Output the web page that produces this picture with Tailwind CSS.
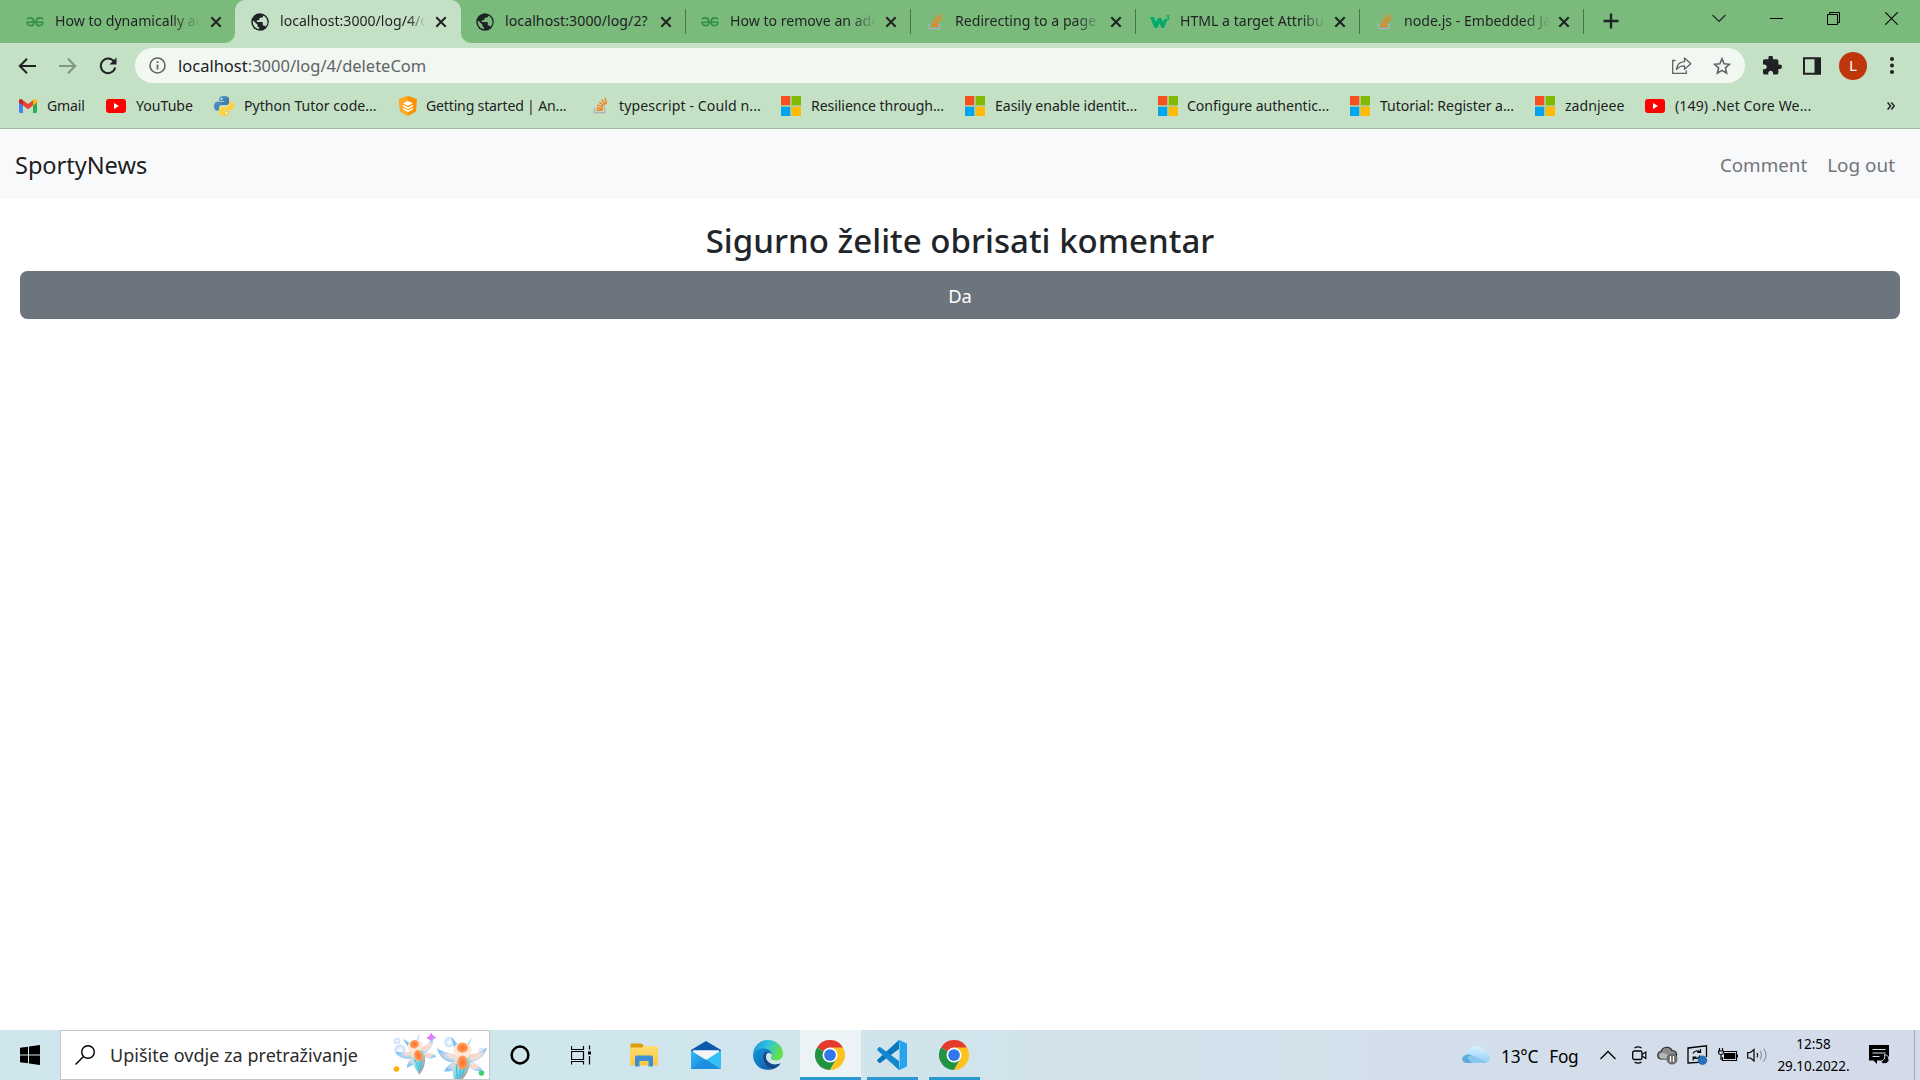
<!DOCTYPE html>
<html lang="hr">
<head>
<meta charset="utf-8">
<title>SportyNews</title>
<script src="https://cdn.jsdelivr.net/npm/@tailwindcss/browser@4"></script>
</head>
<body class="flex h-screen w-screen flex-col overflow-hidden bg-white font-['Noto_Sans','Open_Sans',sans-serif] text-[14.1px] text-[#202124]">

<!-- shared icons -->
<svg class="absolute size-0">
  <defs>
    <linearGradient id="py1" x1="0" y1="0" x2="1" y2="1"><stop offset="0" stop-color="#5a9fd4"/><stop offset="1" stop-color="#306998"/></linearGradient>
    <linearGradient id="py2" x1="0" y1="0" x2="1" y2="1"><stop offset="0" stop-color="#ffe052"/><stop offset="1" stop-color="#ffc331"/></linearGradient>
    <linearGradient id="edgeTop" x1="0" y1="0" x2="1" y2=".35"><stop offset="0" stop-color="#1b8fd6"/><stop offset=".5" stop-color="#2fc2df"/><stop offset="1" stop-color="#66e04b"/></linearGradient>
    <linearGradient id="edgeLow" x1="0" y1="0" x2="1" y2="1"><stop offset="0" stop-color="#1595e0"/><stop offset="1" stop-color="#0c59a4"/></linearGradient>
    <linearGradient id="mailG" x1="0" y1="0" x2="1" y2="1"><stop offset="0" stop-color="#35b8f1"/><stop offset="1" stop-color="#1583d8"/></linearGradient>
    <linearGradient id="folderG" x1="0" y1="0" x2="0" y2="1"><stop offset="0" stop-color="#ffdc70"/><stop offset="1" stop-color="#fcc844"/></linearGradient>
    <linearGradient id="cloudG" x1="0" y1="0" x2="0" y2="1"><stop offset="0" stop-color="#d9f2ff"/><stop offset="1" stop-color="#8fd0f5"/></linearGradient>
    <radialGradient id="bubble"><stop offset="0" stop-color="#ffffff"/><stop offset="1" stop-color="#c3dcfb"/></radialGradient>
    <radialGradient id="wing" cx=".55" cy=".5" r=".55"><stop offset="0" stop-color="#ffc9a3"/><stop offset=".55" stop-color="#f5dfdb"/><stop offset="1" stop-color="#7cc4fa"/></radialGradient>
    <linearGradient id="tail" x1=".2" y1="0" x2=".8" y2="1"><stop offset="0" stop-color="#fbe3d6"/><stop offset=".5" stop-color="#7fd4e8"/><stop offset="1" stop-color="#f4623a"/></linearGradient>
    <radialGradient id="core"><stop offset="0" stop-color="#ff6a2b"/><stop offset="1" stop-color="#ffa25f"/></radialGradient>
    <symbol id="x" viewBox="0 0 12 12"><path d="M1.3 1.3l9.4 9.4M10.7 1.3l-9.4 9.4" stroke="#202124" stroke-width="2" fill="none"/></symbol>
    <symbol id="gfg" viewBox="0 0 18 12"><g fill="none" stroke="#2f8d46" stroke-width="1.6"><path d="M1.2 3.4C2 1.2 7.800 .8 7.900 5.900C7.900 11 1.300 10.600 1.100 6.300H16.900C16.700 10.600 10.100 11 10.100 5.900C10.200 .8 16 1.200 16.800 3.400"/></g></symbol>
    <symbol id="globe" viewBox="2 2 20 20"><circle cx="12" cy="12" r="9.700" fill="#202124"/><path d="M4.300 10.300l4.900 4.700v1.200c0 1 .9 1.900 1.900 1.900v1.800C6.900 19.500 4 16 4 12c0-.6.1-1.200.3-1.700zM18 17.400c-.3-.8-1-1.400-1.900-1.400h-1v-3c0-.6-.5-1-1-1H8.500v-2h2c.6 0 1-.5 1-1V7.200h2c1.100 0 1.900-.9 1.900-1.900v-.5c3 1.200 4.900 4 4.900 7.200 0 2.100-.8 4-2.300 5.400z" fill="currentColor"/></symbol>
    <symbol id="so" viewBox="0 0 16 18"><path d="M1.500 11.500v5h11v-5" fill="none" stroke="#aeb0b5" stroke-width="1.400"/><g stroke="#f48024" stroke-width="1.500"><path d="M3.500 14h7M3.700 11.400l7 1M4.500 8.300l6.500 2.400M6.500 5.200l5.300 4.200M9.300 2.700l3.800 5.500M13 .9l1.200 6.600"/></g></symbol>
    <symbol id="ms" viewBox="0 0 20 20"><path d="M0 0h20v20H0z" fill="#b5cfa0"/><path d="M0 0h9.200v9.200H0z" fill="#f65022"/><path d="M10.800 0H20v9.200h-9.200z" fill="#7fba00"/><path d="M0 10.800h9.200V20H0z" fill="#00a4ef"/><path d="M10.800 10.800H20V20h-9.200z" fill="#ffb900"/></symbol>
    <symbol id="yt" viewBox="0 0 20 14"><rect width="20" height="14" rx="3" fill="#f00"/><path d="M8 4l5 3-5 3z" fill="#fff"/></symbol>
    <symbol id="gmail" viewBox="0 0 18 14"><path d="M0 1.800V12.800q0 1.200 1.200 1.200H4V6z" fill="#4285f4"/><path d="M18 1.800V12.800q0 1.200-1.200 1.200H14V6z" fill="#34a853"/><path d="M0 1.800C0 0 1.800-.5 3 .5L4 1.300V6.500L0 3.500z" fill="#c5221f"/><path d="M18 1.800C18 0 16.200-.5 15 .5L14 1.300V6.500L18 3.500z" fill="#fbbc04"/><path d="M4 1.300L9 5.100 14 1.300V6.500L9 10.200 4 6.500z" fill="#ea4335"/></symbol>
    <symbol id="python" viewBox="0 0 20 20"><path d="M9.900 0C6.600 0 5.300 1 5.300 2.700V5h4.800v.8H3.200C1.300 5.800 0 7.400 0 10.200 0 13 1.200 14.600 2.900 14.600h2V12c0-1.800 1.400-3 3-3h4.700c1.500 0 2.400-1 2.400-2.400V2.700C15 1 13.400 0 9.900 0z" fill="url(#py1)"/><path d="M10.100 20c3.300 0 4.600-1 4.600-2.700V15H9.900v-.8h6.900c1.900 0 3.200-1.600 3.200-4.400 0-2.800-1.200-4.400-2.900-4.400h-2V8c0 1.800-1.400 3-3 3H7.400C5.900 11 5 12 5 13.400v3.900C5 19 6.600 20 10.100 20z" fill="url(#py2)"/><circle cx="7.500" cy="2.800" r=".9" fill="#fff"/><circle cx="12.500" cy="17.200" r=".9" fill="#fff"/></symbol>
    <symbol id="layers" viewBox="0 0 20 20"><path d="M10 0l9 3-1 12.500L10 20l-8-4.500L1 3z" fill="#ff9100"/><path d="M10 0L1 3l1 12.500L10 20z" fill="#ffa726"/><g fill="#fff"><path d="M5 7.300L10 5l5 2.200-5 2.500z"/><path d="M5 8.800l5 2.400 5-2.400v1.700l-5 2.400-5-2.400z"/><path d="M5 11.800l5 2.400 5-2.400v1.700l-5 2.400-5-2.400z"/></g></symbol>
    <symbol id="chrome" viewBox="0 0 48 48"><path d="M24 24L3.200 12A24 24 0 0 1 44.800 12z" fill="#e33b2e"/><path d="M24 24L3.200 12A24 24 0 0 0 24 48L34.400 30z" fill="#229342"/><path d="M24 24V12H44.800A24 24 0 0 1 24 48L34.400 30z" fill="#fcc31e"/><circle cx="24" cy="24" r="12" fill="#fff"/><circle cx="24" cy="24" r="9.400" fill="#2f77ea"/></symbol>
    <symbol id="creature" viewBox="0 0 50 48"><path d="M17 12L14 1l8 9zM29 12L35 1l-7 9z" fill="#74c3f5"/><path d="M20 18C10 17 3 14 0 12c2 9 9 15 20 14zM30 18c8 0 14-3 19-7-2 8-6 13-18 15z" fill="url(#wing)"/><path d="M20 24c-8 3-12 7-13 11 6 0 11-1 15-5zM30 24c8 2 13 6 15 10-6 1-12 0-15-5z" fill="url(#wing)"/><path d="M18 20c-4 10-3 18 0 28 9-6 15-13 14-27z" fill="url(#tail)"/><path d="M19 28l1 16M23 30l-1 13M28 28l-4 12" stroke="#35c2dc" stroke-width="1.300"/><ellipse cx="25" cy="14" rx="9" ry="8" fill="#fde6da"/><ellipse cx="25" cy="11.500" rx="5.500" ry="5" fill="url(#core)"/><ellipse cx="25" cy="26" rx="5" ry="7" fill="url(#core)"/></symbol>
  </defs>
</svg>

<!-- tab strip -->
<header class="flex h-[43px] shrink-0 items-end bg-[#7abb7c] pl-[10px]">
  <div class="flex h-[43px] w-[225px] items-center pl-4">
    <svg class="h-3 w-[18px]"><use href="#gfg"/></svg>
    <span class="ml-[11px] w-[146px] overflow-hidden pb-0.5 whitespace-nowrap bg-linear-to-r from-[#202124] from-80% to-transparent bg-clip-text text-transparent">How to dynamically add</span>
    <svg class="ml-[9px] size-3"><use href="#x"/></svg>
  </div>
  <div class="relative flex h-[43px] w-[226px] items-center rounded-t-[10px] bg-[#c5e1c5] pl-4">
    <svg class="absolute bottom-0 -left-2.5 size-2.5" viewBox="0 0 10 10"><path d="M10 0A10 10 0 0 1 0 10h10z" fill="#c5e1c5"/></svg>
    <svg class="absolute -right-2.5 bottom-0 size-2.5" viewBox="0 0 10 10"><path d="M0 0a10 10 0 0 0 10 10H0z" fill="#c5e1c5"/></svg>
    <svg class="size-[18px] text-[#c5e1c5]"><use href="#globe"/></svg>
    <span class="ml-[11px] w-[146px] overflow-hidden pb-0.5 whitespace-nowrap bg-linear-to-r from-[#202124] from-88% to-transparent bg-clip-text text-transparent">localhost:3000/log/4/d</span>
    <svg class="ml-[9px] size-3"><use href="#x"/></svg>
  </div>
  <div class="flex h-[43px] w-[225px] items-center pl-[15px]">
    <svg class="size-[18px] text-[#7abb7c]"><use href="#globe"/></svg>
    <span class="ml-[11px] w-[146px] pb-0.5 tracking-[0.08px] whitespace-nowrap">localhost:3000/log/2?</span>
    <svg class="ml-[9px] size-3"><use href="#x"/></svg>
    <i class="ml-auto h-[25px] w-px bg-[#4a7150]"></i>
  </div>
  <div class="flex h-[43px] w-[225px] items-center pl-[15px]">
    <svg class="h-3 w-[18px]"><use href="#gfg"/></svg>
    <span class="ml-[11px] w-[146px] overflow-hidden pb-0.5 whitespace-nowrap bg-linear-to-r from-[#202124] from-83% to-transparent bg-clip-text text-transparent">How to remove an add</span>
    <svg class="ml-[9px] size-3"><use href="#x"/></svg>
    <i class="ml-auto h-[25px] w-px bg-[#4a7150]"></i>
  </div>
  <div class="flex h-[43px] w-[225px] items-center pl-[17px]">
    <svg class="h-[17px] w-[15px]"><use href="#so"/></svg>
    <span class="ml-3 w-[146px] overflow-hidden pb-0.5 whitespace-nowrap bg-linear-to-r from-[#202124] from-83% to-transparent bg-clip-text text-transparent">Redirecting to a page</span>
    <svg class="ml-[9px] size-3"><use href="#x"/></svg>
    <i class="ml-auto h-[25px] w-px bg-[#4a7150]"></i>
  </div>
  <div class="flex h-[43px] w-[224px] items-center pl-3.5">
    <svg class="h-3.5 w-5" viewBox="0 0 20 14"><path d="M0 2h4l2 5 2-4h3l2 4 1.500-3h3L14 13h-2.500L9.500 8.500 7 13H4.500z" fill="#04aa6d"/><path d="M16.300.8h2.500L17.500 2.500q1.500.2 1.200 1.400-.6 1.200-2.500.5" fill="none" stroke="#04aa6d" stroke-width="1.100"/></svg>
    <span class="ml-[10px] w-[146px] overflow-hidden pb-0.5 whitespace-nowrap bg-linear-to-r from-[#202124] from-83% to-transparent bg-clip-text text-transparent">HTML a target Attribu</span>
    <svg class="ml-[8px] size-3"><use href="#x"/></svg>
    <i class="ml-auto h-[25px] w-px bg-[#4a7150]"></i>
  </div>
  <div class="flex h-[43px] w-[224px] items-center pl-[17px]">
    <svg class="h-[17px] w-[15px]"><use href="#so"/></svg>
    <span class="ml-3 w-[146px] overflow-hidden pb-0.5 whitespace-nowrap bg-linear-to-r from-[#202124] from-83% to-transparent bg-clip-text text-transparent">node.js - Embedded Ja</span>
    <svg class="ml-[8px] size-3"><use href="#x"/></svg>
    <i class="ml-auto h-[25px] w-px bg-[#4a7150]"></i>
  </div>
  <svg class="mb-3.5 ml-[19px] size-4" viewBox="0 0 16 16"><path d="M8 .5v15M.5 8h15" stroke="#202124" stroke-width="2.300"/></svg>
  <div class="ml-auto flex h-[43px] items-center pr-[22px] pb-[6px]">
    <svg class="mr-11 h-[9px] w-3.5" viewBox="0 0 14 9"><path d="M.5 1L7 7.500 13.500 1" fill="none" stroke="#202124" stroke-width="1.100"/></svg>
    <svg class="mr-[44px] h-[13px] w-[13px]" viewBox="0 0 13 13"><path d="M0 6.500h13" stroke="#000"/></svg>
    <svg class="mr-[45px] size-[13px] overflow-visible" viewBox="0 0 13 13"><path d="M.5 2.500h10v10H.5zM2.500 2.500v-2h10v10h-2" fill="none" stroke="#000"/></svg>
    <svg class="size-[13px]" viewBox="0 0 13 13"><path d="M.3.300l12.400 12.400M12.700.3L.3 12.700" stroke="#000" stroke-width="1.100"/></svg>
  </div>
</header>

<!-- toolbar -->
<div class="flex h-[45px] shrink-0 items-center bg-[#c5e1c5] pl-[18px]">
  <svg class="h-4 w-[18px]" viewBox="0 0 18 16"><path d="M18 8H2M9 .8L1.800 8 9 15.200" fill="none" stroke="#202124" stroke-width="2"/></svg>
  <svg class="ml-[23px] h-4 w-[18px]" viewBox="0 0 18 16"><path d="M0 8h16M9 .8L16.200 8 9 15.200" fill="none" stroke="#7d967f" stroke-width="2"/></svg>
  <svg class="ml-[22px] size-[18px]" viewBox="0 0 18 18"><path d="M15 4.500A7.300 7.300 0 1 0 16.200 10.500" fill="none" stroke="#202124" stroke-width="2"/><path d="M17.500.6V7.500h-7z" fill="#202124"/></svg>
  <div class="ml-[18px] flex h-[35px] w-[1610px] items-center rounded-full bg-[#f1f7f1] pr-3.5 pl-3.5">
    <svg class="size-[17px]" viewBox="0 0 17 17"><circle cx="8.500" cy="8.500" r="7.500" fill="none" stroke="#5f6368" stroke-width="1.600"/><path d="M8.500 7.500v5M8.500 4.300v1.800" stroke="#5f6368" stroke-width="1.700"/></svg>
    <span class="ml-3 pt-0.5 text-[16.5px] text-[#5f6368]"><span class="text-[#202124]">localhost</span>:3000/log/4/deleteCom</span>
    <svg class="ml-auto h-[17px] w-5" viewBox="0 0 20 17"><path d="M3.500 3.500H.7v12.800h13.600v-3" fill="none" stroke="#5f6368" stroke-width="1.300"/><path d="M4.500 12.500C5 7 8.500 4.800 12.500 4.600V1l6.300 5.700-6.300 5.600V8.800C8.500 8.800 6.300 10 4.500 12.500z" fill="none" stroke="#5f6368" stroke-width="1.300" stroke-linejoin="round"/></svg>
    <svg class="ml-[21px] h-[18px] w-[18px]" viewBox="0 0 18 18"><path d="M9 1.800l2.100 5 5.400.5-4.100 3.600 1.200 5.300L9 13.400l-4.600 2.800 1.200-5.300L1.500 7.300l5.400-.5z" fill="none" stroke="#5f6368" stroke-width="1.600"/></svg>
  </div>
  <svg class="ml-[18px] size-[19px]" viewBox="2 1.500 21 21"><path d="M20.500 11H19V7c0-1.100-.9-2-2-2h-4V3.500a2.500 2.500 0 0 0-5 0V5H4c-1.100 0-2 .9-2 2v3.800h1.500c1.500 0 2.700 1.200 2.700 2.700S5 16.200 3.500 16.200H2V20c0 1.100.9 2 2 2h3.800v-1.500c0-1.500 1.200-2.700 2.700-2.700s2.700 1.200 2.700 2.700V22H17c1.100 0 2-.9 2-2v-4h1.500a2.500 2.500 0 0 0 0-5z" fill="#202124"/></svg>
  <svg class="ml-[21px] size-[18px]" viewBox="0 0 18 18"><path d="M1 1.200h16v15.600H1z" fill="none" stroke="#202124" stroke-width="2"/><path d="M11.500 1h5.500v16h-5.500z" fill="#202124"/></svg>
  <div class="ml-[18px] grid size-7 place-items-center rounded-full bg-[#bf360c] text-[15px] leading-none text-white">L</div>
  <svg class="ml-[23px] h-[17px] w-1" viewBox="0 0 4 17"><g fill="#202124"><circle cx="2" cy="2" r="2"/><circle cx="2" cy="8.500" r="2"/><circle cx="2" cy="15" r="2"/></g></svg>
</div>

<!-- bookmarks -->
<nav class="flex h-[41px] shrink-0 items-center border-b border-[#9fb5a0] bg-[#c5e1c5] pb-1 pl-[19px] whitespace-nowrap">
  <a class="flex w-[87px] items-center gap-[10px]"><svg class="h-3.5 w-[18px]"><use href="#gmail"/></svg><span class="tracking-[-0.2px]">Gmail</span></a>
  <a class="flex w-[108px] items-center gap-[10px]"><svg class="h-3.5 w-5"><use href="#yt"/></svg>YouTube</a>
  <a class="flex w-[184px] items-center gap-[10px]"><svg class="size-5"><use href="#python"/></svg>Python Tutor code...</a>
  <a class="flex w-[195px] items-center gap-[8px]"><svg class="size-5"><use href="#layers"/></svg><span class="tracking-[-0.18px]">Getting started | An...</span></a>
  <a class="flex w-[188px] items-center gap-[11px]"><svg class="h-[17px] w-[15px]"><use href="#so"/></svg><span class="tracking-[0.1px]">typescript - Could n...</span></a>
  <a class="flex w-[184px] items-center gap-[10px]"><svg class="size-5"><use href="#ms"/></svg><span class="tracking-[-0.08px]">Resilience through...</span></a>
  <a class="flex w-[193px] items-center gap-[10px]"><svg class="size-5"><use href="#ms"/></svg><span class="tracking-[-0.04px]">Easily enable identit...</span></a>
  <a class="flex w-[192px] items-center gap-[9px]"><svg class="size-5"><use href="#ms"/></svg><span class="tracking-[-0.04px]">Configure authentic...</span></a>
  <a class="flex w-[185px] items-center gap-[10px]"><svg class="size-5"><use href="#ms"/></svg><span class="tracking-[-0.06px]">Tutorial: Register a...</span></a>
  <a class="flex w-[110px] items-center gap-[10px]"><svg class="size-5"><use href="#ms"/></svg>zadnjeee</a>
  <a class="flex items-center gap-[10px]"><svg class="h-3.5 w-5"><use href="#yt"/></svg><span class="tracking-[0.1px]">(149) .Net Core We...</span></a>
  <svg class="mr-[25px] ml-auto h-2 w-2" viewBox="0 0 8 8"><path d="M.6.6L3.600 4 .6 7.400M4.300.6L7.300 4 4.300 7.400" fill="none" stroke="#202124" stroke-width="1.500"/></svg>
</nav>

<!-- page -->
<main class="flex grow flex-col">
  <div class="flex h-[70px] items-center bg-[#f8f9fb] pt-0.5 pr-[25px] pl-[15px]">
    <span class="pt-0.5 text-[23.6px] tracking-[-0.05px] text-black/90">SportyNews</span>
    <span class="ml-auto text-[18.8px] text-[#737577]">Comment</span>
    <span class="ml-5 text-[18.9px] text-[#737577]">Log out</span>
  </div>
  <h3 class="mt-[21px] text-center text-[33px] leading-[42px] font-medium tracking-[0.03px] text-[#212529]">Sigurno želite obrisati komentar</h3>
  <button class="mx-5 mt-[9px] h-12 rounded-[7.5px] bg-[#6c757d] pt-0.5 text-[18.4px] text-white">Da</button>
</main>

<!-- taskbar -->
<footer class="flex h-[50px] shrink-0 items-center bg-linear-to-r from-[#cfe6ed] from-30% via-[#d2e2eb] via-60% to-[#d4dbea] text-black">
  <div class="grid w-[60px] place-items-center"><svg class="size-5" viewBox="0 0 20 20"><path d="M0 2.800L8 1.700V9.400H0zM9 1.500L20 0v9.400H9zM0 10.400h8v7.900L0 17.200zM9 10.400h11V20L9 18.500z"/></svg></div>
  <div class="relative flex h-[50px] w-[430px] items-center border border-[#c4c7c9] bg-white pl-3.5">
    <svg class="size-5" viewBox="0 0 20 20"><circle cx="13" cy="7" r="6.300" fill="none" stroke="#000" stroke-width="1.400"/><path d="M8.500 11.500L.5 19.500" stroke="#000" stroke-width="1.400"/></svg>
    <span class="ml-[15px] text-[18px] tracking-[0.03px] text-[#2b2b2b]">Upišite ovdje za pretraživanje</span>
    <svg class="absolute right-0 bottom-0 h-[48px] w-[98px]" viewBox="0 0 98 48">
      <circle cx="6" cy="10" r="3.300" fill="url(#bubble)"/><circle cx="9" cy="19" r="5.500" fill="url(#bubble)"/><circle cx="58.500" cy="11" r="5.200" fill="url(#bubble)"/><circle cx="91" cy="20" r="3" fill="url(#bubble)"/>
      <circle cx="5.500" cy="38" r="2.800" fill="#ffb000"/><circle cx="90.500" cy="42" r="2.800" fill="#43cf6b"/>
      <path d="M40 1.500q1.500 3.500 5.500 5-4 1-4.500 5-2-3.500-6-4.500 4-1.500 5-5.500z" fill="#e07bf5"/>
      <use href="#creature" width="42" height="40" transform="translate(6 3) rotate(-20 21 20)"/>
      <use href="#creature" x="46" y="5" width="51" height="49"/>
    </svg>
  </div>
  <div class="grid w-[60px] place-items-center"><svg class="size-5" viewBox="0 0 20 20"><circle cx="10" cy="10" r="8.400" fill="none" stroke="#000" stroke-width="2.500"/></svg></div>
  <div class="grid w-[61px] place-items-center"><svg class="h-5 w-5" viewBox="0 0 20 20"><path d="M.5 1v3.500h12V1M.5 6.500h12v8H.5zM.5 19.500v-3h12v3M18.500.500v4M18.500 11v8.500" fill="none" stroke="#000" stroke-width="1.200"/><path d="M17 6.500h3v3h-3z"/></svg></div>
  <div class="grid w-[64px] place-items-center pl-0.5"><svg class="h-6 w-7" viewBox="0 0 28 24"><path d="M.5 1.500Q.5.5 1.500.5H11.500L13.500 2.500V6H.5z" fill="#dd9c0a"/><path d="M0 4.500H12L14 3H27q1 0 1 1V21.500q0 1-1 1H1q-1 0-1-1z" fill="url(#folderG)"/><path d="M5 23.500V14.500q0-2 2-2H21q2 0 2 2V23.500H18.500V18H9.500V23.500z" fill="#3f8fd6"/></svg></div>
  <div class="grid w-[62px] place-items-center"><svg class="h-7 w-[30px]" viewBox="0 0 30 28"><path d="M0 9L15 0 30 9V14H0z" fill="#0a5aac"/><path d="M2 9.200H28L28 12 15 20 2 12z" fill="#f5f5f5"/><path d="M0 9.500L15 19V28H0z" fill="url(#mailG)"/><path d="M30 9.500V28L15 19z" fill="#35c0f3"/><path d="M0 28L15 18.500 30 28z" fill="#1c8edd"/></svg></div>
  <div class="grid w-[62px] place-items-center"><svg class="size-[30px]" viewBox="0 0 30 30"><path d="M0 14A15 15 0 0 1 15 0C24 0 30 6.500 30 13.500 30 18 27 20.500 23 20.500 19.500 20.500 17.500 19 18 17.500 19.500 16 19 9 11.500 9 5.500 9 0 11.500 0 14z" fill="url(#edgeTop)"/><path d="M0 15C0 11 5 8.500 11 8.500 16 8.500 19 12 18.800 15 18 11.500 11 12 10.500 19 10 25 16 29 20 29 9 32.500 0 25 0 15z" fill="url(#edgeLow)"/><path d="M13 11.800C8 15 9 27 19.500 29.200 23 28.500 26 26 27.800 23 20 27 13 22 13 17 13 14.500 14 13 15.500 12.300z" fill="#114a8b"/></svg></div>
  <div class="relative ml-px grid h-[50px] w-[61px] place-items-center bg-[#ebf3f7] pr-px"><svg class="size-[30px]"><use href="#chrome"/></svg><i class="absolute inset-x-0 bottom-0 h-[3px] bg-[#2b98cf]"></i></div>
  <div class="relative ml-1.5 grid h-[50px] w-[51px] place-items-center pr-px"><svg class="size-[30px]" viewBox="0 0 30 30"><path d="M22 0V9L3.500 22.700Q2.700 23.200 2 22.700L.5 21.200Q-.2 20.400.6 19.600z" fill="#0a76bd"/><path d="M22 30V21L3.500 7.300Q2.700 6.800 2 7.300L.5 8.800Q-.2 9.600.6 10.400z" fill="#1487cf"/><path d="M22.300 0L30 3.500V26.500L22.300 30Q21.500 29.500 21 28.500L22.500 27V3L21 1.500Q21.500.5 22.300 0z" fill="#27a4ee"/></svg><i class="absolute inset-x-0 bottom-0 h-[3px] bg-[#2b98cf]"></i></div>
  <div class="relative ml-[11px] grid h-[50px] w-[51px] place-items-center pr-px"><svg class="size-[30px]"><use href="#chrome"/></svg><i class="absolute inset-x-0 bottom-0 h-[3px] bg-[#2b98cf]"></i></div>

  <div class="flex h-[50px] grow items-center pl-[482px]">
    <svg class="h-[18px] w-7 shrink-0" viewBox="0 0 28 18"><path d="M6 17A6 6 0 0 1 5 8C6 3 10 0 14 0 18 0 21 2.500 22 6 26 6 28 9 28 11.500 28 15 25.500 17 22 17z" fill="url(#cloudG)"/><path d="M0 13C1 9 6 7.500 10 9.500L22 14.500Q24 16 22 17H5Q1 17 0 13z" fill="#5ea9da"/><path d="M5 11q4-3 9 0t10 3q-1 3-4 3H10z" fill="#a8dcf8" opacity=".6"/></svg>
    <span class="ml-[11px] pt-1 text-[17.3px] tracking-[-0.2px]">13°C</span>
    <span class="ml-[11px] pt-1 text-[17.3px] tracking-[-0.3px]">Fog</span>
    <svg class="ml-[22px] h-2.5 w-4 shrink-0" viewBox="0 0 16 10"><path d="M.5 9L8 1.500 15.500 9" fill="none" stroke="#000" stroke-width="1.300"/></svg>
    <svg class="ml-4 h-[18px] w-[15px] shrink-0" viewBox="0 0 15 18"><path d="M2.500 2Q6-.3 9.500 2M2.500 16Q6 18.300 9.500 16" fill="none" stroke="#000" stroke-width="1.200"/><rect x=".7" y="5" width="9.300" height="8.500" rx="1.500" fill="none" stroke="#000" stroke-width="1.300"/><path d="M10 8.500L13.800 6v6.500L10 10" fill="none" stroke="#000" stroke-width="1.200"/></svg>
    <svg class="ml-[10px] h-[19px] w-[21px] shrink-0" viewBox="0 0 21 19"><path d="M4 13A3.800 3.800 0 0 1 4 5.500C6 0 13 0 15 4.500 18.500 4.500 20 7 19.500 10L14 13z" fill="#8b8b8b" stroke="#222" stroke-width="1.200"/><path d="M3.500 12.500Q1 10 3 7.500 8 5.500 13 11v2z" fill="#b6b6b6"/><circle cx="15" cy="13" r="5.500" fill="#6c6c6c"/><path d="M13.500 10v6M16.500 10v6" stroke="#fff" stroke-width="1.300"/></svg>
    <svg class="ml-[9px] h-5 w-[21px] shrink-0" viewBox="0 0 21 20"><path d="M3.500 3H1V18l11-.6M1 3L19.500.8V12" fill="none" stroke="#000" stroke-width="1.300"/><path d="M6 8.500A4.500 4.500 0 0 1 13 7M13.500 4v3.300h-3.200M13 10.500A4 4 0 0 1 6.500 12.500M6.200 15.500v-3.300H9.500" fill="none" stroke="#000" stroke-width="1.200"/><circle cx="15.500" cy="15.300" r="4.700" fill="#2b6fba"/></svg>
    <svg class="ml-[10px] h-[14px] w-5 shrink-0" viewBox="0 0 20 14"><path d="M5 3.500H18.500V12.500H4.500V9" fill="none" stroke="#000" stroke-width="1.200"/><path d="M6 5h11.200v6H6zM18.500 6.500H20v3h-1.500z"/><path d="M1.500 0v3M4.500 0v3M.6 3H5.400V5Q5.200 6.500 3 6.500 .8 6.500.6 5zM3 6.500V12" fill="none" stroke="#000" stroke-width="1.200"/></svg>
    <svg class="ml-[9px] h-4 w-[21px] shrink-0" viewBox="0 0 21 16"><path d="M.7 5.500H3.500L7 2.500v11.500L3.500 11H.7z" fill="none" stroke="#000" stroke-width="1.200"/><path d="M10 6q1.500 2.200 0 4.500" fill="none" stroke="#000" stroke-width="1.200"/><path d="M13 3.800q3 4.200 0 8.800M16.500 1.500q5 6.500 0 13" fill="none" stroke="#8c93a0" stroke-width="1.200"/></svg>
    <div class="ml-2 flex w-[74px] shrink-0 flex-col text-center text-[13.5px] leading-[22.5px] tracking-[-0.05px]"><span>12:58</span><span>29.10.2022.</span></div>
    <svg class="ml-[19px] h-5 w-[21px] shrink-0" viewBox="0 0 21 20"><path d="M0 0h20v15.500H8V19L4.500 15.500H0z"/><path d="M3.500 4.500h13M3.500 8h13M3.500 11.500h7" stroke="#d4dbea" stroke-width="1.200"/><path d="M15.500 9.500Q17 15 11.500 16.500 14 20 17.500 18.500 21.500 16 19.500 12 18 9.700 15.500 9.500z" stroke="#d4dbea"/></svg>
    <i class="mr-[5px] ml-auto h-[50px] w-px bg-[#a3aab8]"></i>
  </div>
</footer>
</body>
</html>
